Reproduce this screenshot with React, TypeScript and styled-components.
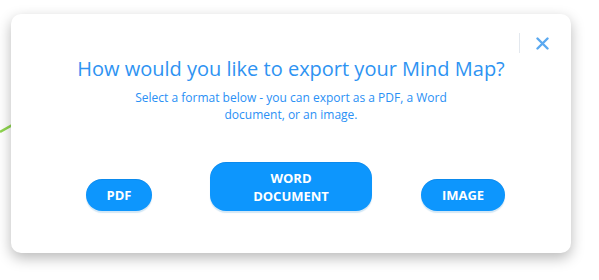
import React from "react";
import styled, { createGlobalStyle } from "styled-components";

const Global = createGlobalStyle`
  html, body { margin: 0; padding: 0; background: #ffffff; }
  body { font-family: "Open Sans", "Liberation Sans", sans-serif; }
  * { box-sizing: border-box; }
`;

const Canvas = styled.div`
  position: relative;
  width: 599px;
  height: 280px;
  padding: 14px 0 0 11px;
  overflow: hidden;
`;

const Link = styled.svg`
  position: absolute;
  left: 0;
  top: 110px;
`;

const Card = styled.div`
  position: relative;
  width: 560px;
  height: 239px;
  background: #ffffff;
  border-radius: 10px;
  box-shadow: 0 5px 14px rgba(0, 0, 0, 0.28);
  display: flex;
  flex-direction: column;
  align-items: center;
  padding: 41px 22px 0;
`;

const Close = styled.button`
  position: absolute;
  top: 19px;
  right: 22px;
  display: flex;
  align-items: center;
  height: 20px;
  padding: 0 0 0 16px;
  border: none;
  border-left: 1px solid #e3e8ee;
  background: none;
  cursor: pointer;
`;

const Title = styled.h2`
  margin: 0;
  font-size: 20px;
  font-weight: 400;
  line-height: 27px;
  color: #2e93f2;
  text-align: center;
`;

const Subtitle = styled.p`
  margin: 7px 0 0;
  width: 330px;
  font-size: 12px;
  line-height: 17px;
  color: #2a90f5;
  text-align: center;
`;

const Options = styled.div`
  display: grid;
  grid-template-columns: repeat(3, 1fr);
  align-items: end;
  width: 100%;
  margin-top: 39px;
`;

const Choice = styled.button<{ $w: number; $tall?: boolean }>`
  justify-self: center;
  width: ${(p) => p.$w}px;
  height: ${(p) => (p.$tall ? 49 : 32)}px;
  border: none;
  border-radius: 16px;
  background: #0d96fd;
  box-shadow: 0 2px 1px rgba(13, 120, 200, 0.18), inset 0 1px 0 rgba(0, 60, 120, 0.12);
  color: #ffffff;
  font-family: "Open Sans", "Liberation Sans", sans-serif;
  font-size: 13px;
  font-weight: 700;
  line-height: 18px;
  text-transform: uppercase;
  cursor: pointer;
`;

export default function App() {
  return (
    <>
      <Global />
      <Canvas>
        <Link width="14" height="30" viewBox="0 0 14 30">
          <path d="M0 22 L14 14" stroke="#8fd650" strokeWidth="2.5" fill="none" />
        </Link>
        <Card>
          <Close aria-label="Close">
            <svg width="13" height="13" viewBox="0 0 13 13">
              <path d="M1.5 1.5 L11.5 11.5 M11.5 1.5 L1.5 11.5" stroke="#5ba9f0" strokeWidth="2.4" strokeLinecap="round" />
            </svg>
          </Close>
          <Title>How would you like to export your Mind Map?</Title>
          <Subtitle>Select a format below - you can export as a PDF, a Word document, or an image.</Subtitle>
          <Options>
            <Choice $w={66}>PDF</Choice>
            <Choice $w={162} $tall>
              Word
              <br />
              Document
            </Choice>
            <Choice $w={84}>Image</Choice>
          </Options>
        </Card>
      </Canvas>
    </>
  );
}
